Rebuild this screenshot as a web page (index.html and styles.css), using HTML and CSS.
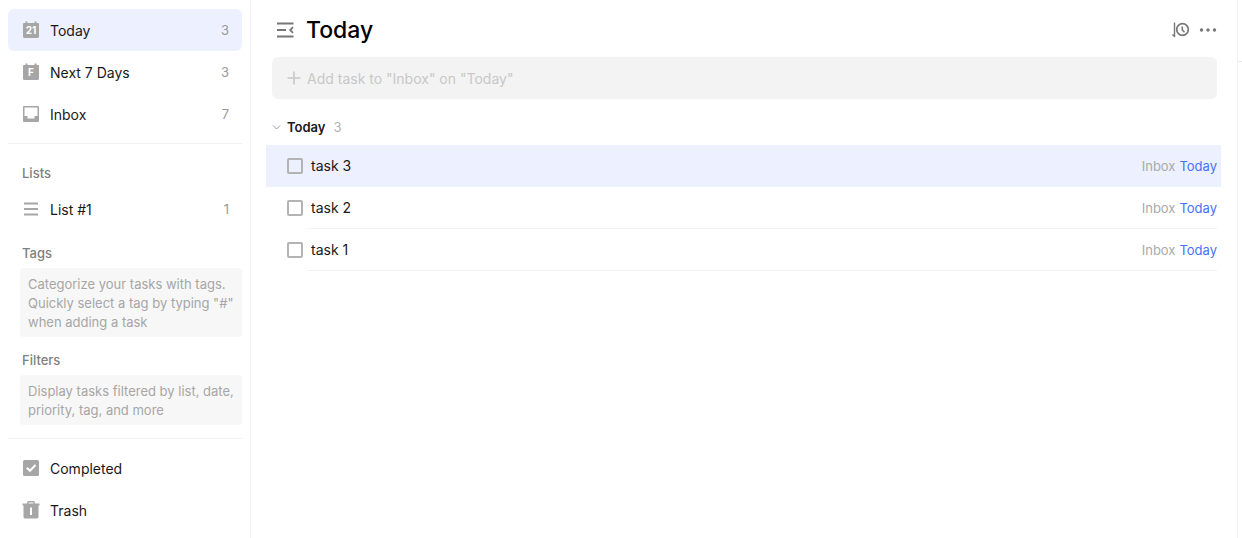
FILE: index.html
```html
<!DOCTYPE html>
<html lang="en">
<head>
    <meta charset="UTF-8">
    <meta name="viewport" content="width=device-width, initial-scale=1.0">
    <title>Today</title>
    <link rel="stylesheet" href="styles.css">
</head>
<body>
    <div class="app">
        <aside class="sidebar">
            <nav>
                <a href="#today" class="nav-item active">
                    <svg class="icon" viewBox="0 0 18 18">
                        <path d="M2 2h1.500V.5h2V2h7V.5h2V2H16a1 1 0 0 1 1 1v12.500a1.500 1.500 0 0 1-1.500 1.500h-13A1.500 1.500 0 0 1 1 15.500V3a1 1 0 0 1 1-1z" fill="currentColor"/>
                        <text class="icon-text" x="9" y="13" text-anchor="middle">21</text>
                    </svg>
                    <span class="nav-label">Today</span>
                    <span class="count">3</span>
                </a>
                <a href="#week" class="nav-item">
                    <svg class="icon" viewBox="0 0 18 18">
                        <path d="M2 2h1.500V.5h2V2h7V.5h2V2H16a1 1 0 0 1 1 1v12.500a1.500 1.500 0 0 1-1.500 1.500h-13A1.500 1.500 0 0 1 1 15.500V3a1 1 0 0 1 1-1z" fill="currentColor"/>
                        <text class="icon-text" x="9" y="13" text-anchor="middle">F</text>
                    </svg>
                    <span class="nav-label">Next 7 Days</span>
                    <span class="count">3</span>
                </a>
                <a href="#inbox" class="nav-item">
                    <svg class="icon" viewBox="0 0 18 18">
                        <path fill-rule="evenodd" d="M2 1h14a1 1 0 0 1 1 1v14a1 1 0 0 1-1 1H2a1 1 0 0 1-1-1V2a1 1 0 0 1 1-1zM2.500 2.500v8.500H5.500v2.500h7V11h3V2.500z" fill="currentColor"/>
                    </svg>
                    <span class="nav-label">Inbox</span>
                    <span class="count">7</span>
                </a>
            </nav>

            <div class="sections">
                <h2>Lists</h2>
                <a href="#list1" class="nav-item">
                    <svg class="icon" viewBox="0 0 18 18">
                        <path d="M2 3.500h14M2 9h14M2 14.500h14" stroke="currentColor" stroke-width="1.800"/>
                    </svg>
                    <span class="nav-label">List #1</span>
                    <span class="count">1</span>
                </a>

                <h2>Tags</h2>
                <p class="hint">Categorize your tasks with tags. Quickly select a tag by typing "#" when adding a task</p>

                <h2>Filters</h2>
                <p class="hint">Display tasks filtered by list, date, priority, tag, and more</p>
            </div>

            <nav>
                <a href="#completed" class="nav-item">
                    <svg class="icon" viewBox="0 0 18 18">
                        <rect x="1" y="1" width="16" height="16" rx="1.500" fill="currentColor"/>
                        <path d="M4.800 8.800l3.200 3 5.500-5.800" fill="none" stroke="#fff" stroke-width="2"/>
                    </svg>
                    <span class="nav-label">Completed</span>
                </a>
                <a href="#trash" class="nav-item">
                    <svg class="icon" viewBox="0 0 18 18">
                        <path d="M5.800 3V1.800Q5.800 .8 6.800 .8h4.400q1 0 1 1V3" fill="none" stroke="currentColor" stroke-width="1.500"/>
                        <path d="M.5 2.500h17v2H16.500V16a1.500 1.500 0 0 1-1.500 1.500H3A1.500 1.500 0 0 1 1.500 16V4.500h-1z" fill="currentColor"/>
                        <path d="M9 6.500v7.500" stroke="#fff" stroke-width="2"/>
                    </svg>
                    <span class="nav-label">Trash</span>
                </a>
            </nav>
        </aside>

        <main class="main">
            <header class="header">
                <button type="button" class="icon-btn" aria-label="Toggle sidebar">
                    <svg width="18" height="18" viewBox="0 0 18 18" fill="none" stroke="currentColor" stroke-width="1.800">
                        <path d="M1 2.500h16.500M1 9h9M1 15.500h16.500M17 6.200L14.200 9l2.800 2.800"/>
                    </svg>
                </button>
                <h1>Today</h1>
                <button type="button" class="icon-btn" aria-label="Sort by time">
                    <svg width="18" height="18" viewBox="0 0 18 18" fill="none" stroke="currentColor">
                        <path d="M2.500 1.500v14.500M.5 13.500l2 2" stroke-width="1.400"/>
                        <circle cx="10.500" cy="8.500" r="5.800" stroke-width="1.700"/>
                        <path d="M10.300 5.500v3.500l2.200 2.200" stroke-width="1.600"/>
                    </svg>
                </button>
                <button type="button" class="icon-btn" aria-label="More">
                    <svg width="18" height="18" viewBox="0 0 18 18" fill="currentColor">
                        <circle cx="2.500" cy="9" r="1.700"/>
                        <circle cx="9" cy="9" r="1.700"/>
                        <circle cx="15.500" cy="9" r="1.700"/>
                    </svg>
                </button>
            </header>

            <form class="add-task">
                <svg width="14" height="14" viewBox="0 0 14 14" stroke="currentColor" stroke-width="1.600">
                    <path d="M7 .5v13M.5 7h13"/>
                </svg>
                <input type="text" aria-label="Add task" placeholder='Add task to "Inbox" on "Today"'>
            </form>

            <button type="button" class="group-title" aria-expanded="true">
                <svg width="9" height="9" viewBox="0 0 9 9" fill="none" stroke="#999">
                    <path d="M1 2.500l3.500 3.500L8 2.500"/>
                </svg>
                <span>Today</span>
                <span class="group-count">3</span>
            </button>

            <ul class="tasks">
                <li class="task selected">
                    <input type="checkbox" id="task3">
                    <div class="task-body">
                        <label for="task3">task 3</label>
                        <a href="#inbox" class="task-list">Inbox</a>
                        <a href="#today" class="task-date">Today</a>
                    </div>
                </li>
                <li class="task">
                    <input type="checkbox" id="task2">
                    <div class="task-body">
                        <label for="task2">task 2</label>
                        <a href="#inbox" class="task-list">Inbox</a>
                        <a href="#today" class="task-date">Today</a>
                    </div>
                </li>
                <li class="task">
                    <input type="checkbox" id="task1">
                    <div class="task-body">
                        <label for="task1">task 1</label>
                        <a href="#inbox" class="task-list">Inbox</a>
                        <a href="#today" class="task-date">Today</a>
                    </div>
                </li>
            </ul>
        </main>

        <aside class="detail">
            <div class="detail-header"></div>
        </aside>
    </div>
</body>
</html>
```
FILE: styles.css
```css
* {
    margin: 0;
    padding: 0;
    box-sizing: border-box;
}

body {
    font-family: Inter, "Liberation Sans", sans-serif;
    font-size: 14px;
    color: #191919;
    background: #fff;
}

a {
    color: inherit;
    text-decoration: none;
}

button {
    font: inherit;
    background: none;
    border: none;
    cursor: pointer;
}

.app {
    display: grid;
    grid-template-columns: 251px 1fr 5px;
    min-height: 100vh;
}

/* Sidebar */
.sidebar {
    padding: 9px 8px 6px;
    border-right: 1px solid #f2f2f2;
}

.nav-item {
    display: flex;
    align-items: center;
    gap: 10px;
    height: 42px;
    padding: 0 13px 0 14px;
    border-radius: 6px;
}

.nav-item.active {
    background: #edf0ff;
}

.nav-label {
    flex: 1;
}

.icon {
    width: 18px;
    height: 18px;
    color: #a6a6a6;
}

.icon-text {
    font-size: 10px;
    font-weight: 700;
    fill: #fff;
}

.count {
    font-size: 13px;
    color: #999;
}

.sections {
    margin: 8px 0;
    padding: 6px 0 13px;
    border-top: 1px solid #f2f2f2;
    border-bottom: 1px solid #f2f2f2;
}

h2 {
    margin: 13px 0 5px 14px;
    font-size: 13px;
    font-weight: 500;
    line-height: 20px;
    color: #808080;
}

.hint {
    margin-left: 12px;
    padding: 7px 8px 5px;
    border-radius: 4px;
    font-size: 13px;
    line-height: 19px;
    color: #a6a6a6;
    background: #f7f7f7;
}

/* Task list */
.main {
    padding: 9px 16px 0 15px;
}

.header {
    display: flex;
    align-items: center;
    gap: 9px;
    height: 42px;
    padding: 0 4px 0 10px;
}

h1 {
    flex: 1;
    padding-left: 3px;
    font-size: 23px;
    font-weight: 500;
    color: #000;
}

.icon-btn {
    display: flex;
    color: #777;
}

.add-task {
    display: flex;
    align-items: center;
    gap: 6px;
    height: 42px;
    margin: 6px 4px 0 6px;
    padding: 0 15px;
    border-radius: 6px;
    color: #c8c8c8;
    background: #f3f3f3;
}

.add-task input {
    flex: 1;
    font: inherit;
    color: #191919;
    background: none;
    border: none;
    outline: none;
}

.add-task input::placeholder {
    color: #c8c8c8;
}

.group-title {
    display: flex;
    align-items: center;
    gap: 6px;
    height: 20px;
    margin: 18px 6px 8px;
    font-size: 13px;
    font-weight: 600;
    color: #191919;
}

.group-count {
    margin-left: 2px;
    font-weight: 400;
    color: #b3b3b3;
}

.tasks {
    list-style: none;
}

.task {
    display: flex;
    align-items: center;
    gap: 4px;
    height: 42px;
    padding: 0 4px 0 21px;
}

.task.selected {
    background: #edf0ff;
}

.task input {
    appearance: none;
    width: 16px;
    height: 16px;
    border: 2px solid #b3b3b3;
    border-radius: 2px;
}

.task input:checked {
    background: #b3b3b3;
}

.task-body {
    flex: 1;
    display: flex;
    align-items: center;
    gap: 4px;
    height: 100%;
    padding-left: 4px;
    border-bottom: 1px solid #f2f2f2;
}

.task.selected .task-body {
    border-color: transparent;
}

.task label {
    flex: 1;
}

.task-list {
    font-size: 13px;
    color: #aaa;
}

.task-date {
    font-size: 13px;
    color: #4772fa;
}

/* Task detail */
.detail {
    border-left: 1px solid #f2f2f2;
}

.detail-header {
    height: 62px;
    border-bottom: 1px solid #e8e8e8;
}
```
